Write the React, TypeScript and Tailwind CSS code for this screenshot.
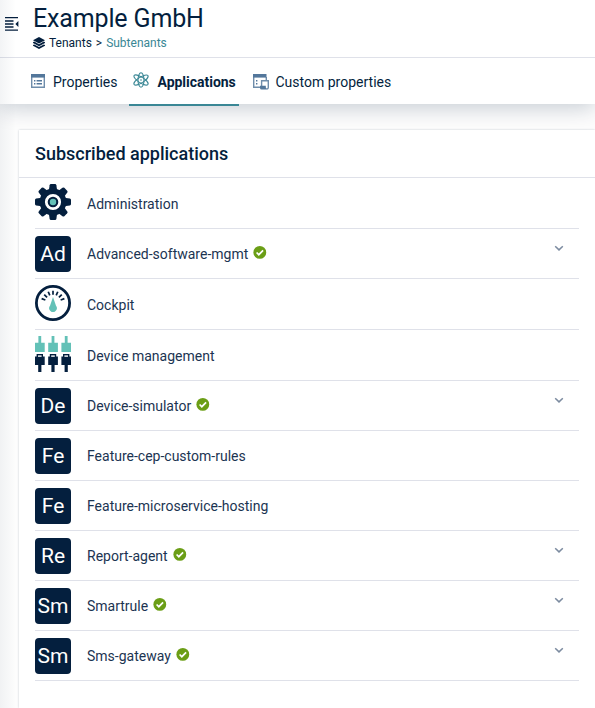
import React from 'react';

const rows: { name: string; icon: string; ok?: boolean; h: string }[] = [
  { name: 'Administration', icon: 'gear', h: 'h-[51px]' },
  { name: 'Advanced-software-mgmt', icon: 'Ad', ok: true, h: 'h-[50px]' },
  { name: 'Cockpit', icon: 'gauge', h: 'h-[51px]' },
  { name: 'Device management', icon: 'plugs', h: 'h-[51px]' },
  { name: 'Device-simulator', icon: 'De', ok: true, h: 'h-[50px]' },
  { name: 'Feature-cep-custom-rules', icon: 'Fe', h: 'h-[50px]' },
  { name: 'Feature-microservice-hosting', icon: 'Fe', h: 'h-[50px]' },
  { name: 'Report-agent', icon: 'Re', ok: true, h: 'h-[50px]' },
  { name: 'Smartrule', icon: 'Sm', ok: true, h: 'h-[50px]' },
  { name: 'Sms-gateway', icon: 'Sm', ok: true, h: 'h-[50px]' },
];

function Gear() {
  return (
    <svg className="mb-[2px] size-9" viewBox="0 0 36 36">
      <g fill="#041f3e">
        {[0, 45, 90, 135, 180, 225, 270, 315].map((a) => (
          <path key={a} transform={`rotate(${a} 18 18)`} d="M13.8 7 14.6 1.2Q14.8 0 16 0H20Q21.2 0 21.4 1.2L22.2 7Z" />
        ))}
        <circle cx="18" cy="18" r="13.4" />
      </g>
      <circle cx="18" cy="18" r="6.7" fill="none" stroke="#fff" strokeWidth="2.8" />
      <circle cx="18" cy="18" r="3.2" fill="#63c1b7" />
    </svg>
  );
}

function Gauge() {
  return (
    <svg className="mb-[2px] size-9" viewBox="0 0 36 36">
      <circle cx="18" cy="18" r="16.6" fill="#fff" stroke="#041f3e" strokeWidth="2.8" />
      <g stroke="#041f3e" strokeWidth="1.7">
        {[-69, -46, -23, 0, 23, 46, 69].map((a) => (
          <path key={a} transform={`rotate(${a} 18 18)`} d="M18 5.8V9.8" />
        ))}
      </g>
      <path d="M18 12 21 20.8A3.8 3.8 0 1 1 15 20.8Z" fill="#63c1b7" />
    </svg>
  );
}

function Plugs() {
  return (
    <svg className="mb-[2px] size-9" viewBox="0 0 36 36">
      {[0, 13.2, 26.4].map((x) => (
        <g key={x} transform={`translate(${x} 0)`}>
          <path d="M3.4 0H6.2V6.8H9.7V16H0V6.8H3.4Z" fill="#63c1b7" />
          <path d="M1.6 18H8V20.6H9.7V29H6.4V36H3.2V29H0V20.6H1.6Z" fill="#041f3e" />
          <path d="M3 19.4H6.6V20.8H3Z" fill="#fff" />
        </g>
      ))}
    </svg>
  );
}

function AppIcon({ icon }: { icon: string }) {
  if (icon === 'gear') return <Gear />;
  if (icon === 'gauge') return <Gauge />;
  if (icon === 'plugs') return <Plugs />;
  return (
    <div className="flex size-9 items-center justify-center rounded-[4px] bg-[#041f3e] text-[21px] leading-9 text-white">
      {icon}
    </div>
  );
}

function Check() {
  return (
    <svg className="mb-[3px] ml-[5px] size-[14px]" viewBox="0 0 14 14">
      <circle cx="6.8" cy="7.4" r="6.4" fill="#6b9e16" />
      <path d="M3.6 7.5 5.8 9.7 10.1 5.3" fill="none" stroke="#fff" strokeWidth="1.7" />
    </svg>
  );
}

function Layers() {
  return (
    <svg className="size-3" viewBox="0 0 12 12" fill="#041f3e">
      <path d="M6 0 12 3.2 6 6.4 0 3.2Z" />
      <path d="M0 5.2 1.2 4.6 6 7.2 10.8 4.6 12 5.2V6L6 9.2 0 6Z" />
      <path d="M0 8 1.2 7.4 6 10 10.8 7.4 12 8V8.8L6 12 0 8.8Z" />
    </svg>
  );
}

function MenuIcon() {
  return (
    <svg className="size-[14px]" viewBox="0 0 14 14">
      <path d="M0 .7H13M0 4H8.5M0 7H8.5M0 10H8.5M0 13.2H13" stroke="#041f3e" strokeWidth="1.3" />
      <path d="M13.4 4V10L10.4 7Z" fill="#041f3e" />
    </svg>
  );
}

function PropertiesIcon() {
  return (
    <svg className="mb-[2px] size-[14px]" viewBox="0 0 14 14">
      <path d="M.7 2V13.3H13.3V2" fill="#fff" stroke="#6f8dab" strokeWidth="1.4" />
      <path d="M0 0H14V3.6H0Z" fill="#53779b" />
      <path d="M3 6.7H4.4M5.6 6.7H11M3 9.7H4.4M5.6 9.7H11" stroke="#53779b" strokeWidth="1.4" />
    </svg>
  );
}

function AtomIcon() {
  return (
    <svg className="mb-[3px] size-4" viewBox="0 0 16 16" fill="none" stroke="#3a8795" strokeWidth="1.1">
      <ellipse cx="8" cy="8" rx="3" ry="7.3" />
      <ellipse cx="8" cy="8" rx="2.8" ry="8.2" transform="rotate(57 8 8)" />
      <ellipse cx="8" cy="8" rx="2.8" ry="8.2" transform="rotate(-57 8 8)" />
      <circle cx="8" cy="8" r="2" fill="#fff" stroke="none" />
      <circle cx="8" cy="8" r=".8" fill="#3a8795" stroke="none" />
    </svg>
  );
}

function CustomIcon() {
  return (
    <svg className="size-4" viewBox="0 0 16 16">
      <path d="M.7 2V13.3H7M13.3 3V6" fill="none" stroke="#6f8dab" strokeWidth="1.4" />
      <path d="M0 0H13.5V3.6H0Z" fill="#53779b" />
      <path d="M3 6.7H4.4M3 9.7H4.4" stroke="#53779b" strokeWidth="1.4" />
      <path d="M8.6 12V6.7H15.3V13.6Q15.3 15 14 15" fill="#fff" stroke="#6f8dab" strokeWidth="1.4" />
      <path d="M7 11.8H12.8V13.6Q13 14.6 14 14.6V15.6H8.6Q7 15.6 7 14Z" fill="#53779b" />
    </svg>
  );
}

export default function App() {
  return (
    <div className="relative flex h-[708px] w-[595px] flex-col overflow-hidden bg-white font-['Roboto',sans-serif] text-[14px] text-[#041f3e]">
      <header className="relative z-20 flex h-[58px] shrink-0 border-b border-[#dfe1e9] bg-white pl-[5px]">
        <div className="pt-[17px]"><MenuIcon /></div>
        <div className="pl-[14px] pt-1">
          <h1 className="text-[25px] leading-[30px] tracking-[-0.15px]">Example GmbH</h1>
          <nav className="mt-px flex h-4 items-center text-[12px] leading-4">
            <Layers />
            <span className="ml-1">Tenants</span>
            <span className="mx-1">&gt;</span>
            <span className="text-[#3a8795]">Subtenants</span>
          </nav>
        </div>
      </header>
      <nav className="z-10 flex h-[46px] shrink-0 bg-white pl-[31px] shadow-[0_4px_22px_rgba(4,31,62,0.22)]">
        <div className="flex h-12 w-[98px] items-center">
          <PropertiesIcon />
          <span className="ml-2">Properties</span>
        </div>
        <div className="flex h-12 w-[110px] items-center border-b-2 border-[#3a8795] pl-1">
          <AtomIcon />
          <span className="ml-[8.5px] pt-[2px] font-bold tracking-[-0.02px]">Applications</span>
        </div>
        <div className="flex h-12 items-center pl-[14px]">
          <CustomIcon />
          <span className="ml-[6.5px]">Custom properties</span>
        </div>
      </nav>
      <main className="flex flex-1 flex-col bg-[#fdfdfd] pl-[19px] pt-[26px]">
        <section className="flex-1 bg-white shadow-[0_0_2px_rgba(4,31,62,0.22)]">
          <h2 className="h-12 border-b border-[#dfe1e9] pl-4 text-[18px] font-medium leading-[47px]">Subscribed applications</h2>
          <ul className="pl-4 pr-4">
            {rows.map((r) => (
              <li key={r.name} className={`flex items-center border-b border-[#dfe1e9] ${r.h}`}>
                <AppIcon icon={r.icon} />
                <span className="ml-4 pt-[2px] text-[#1b3452]">{r.name}</span>
                {r.ok && <Check />}
                {r.ok && (
                  <svg className="mb-[11px] ml-auto mr-[15px] h-[6px] w-[10px]" viewBox="0 0 10 6">
                    <path d="M1.2 1.3 5 4.9 8.8 1.3" fill="none" stroke="#7c8ba0" strokeWidth="1.5" />
                  </svg>
                )}
              </li>
            ))}
          </ul>
        </section>
      </main>
      <div className="pointer-events-none absolute inset-y-0 left-0 z-30 w-4 bg-gradient-to-r from-[#041f3e]/5 to-transparent" />
    </div>
  );
}
